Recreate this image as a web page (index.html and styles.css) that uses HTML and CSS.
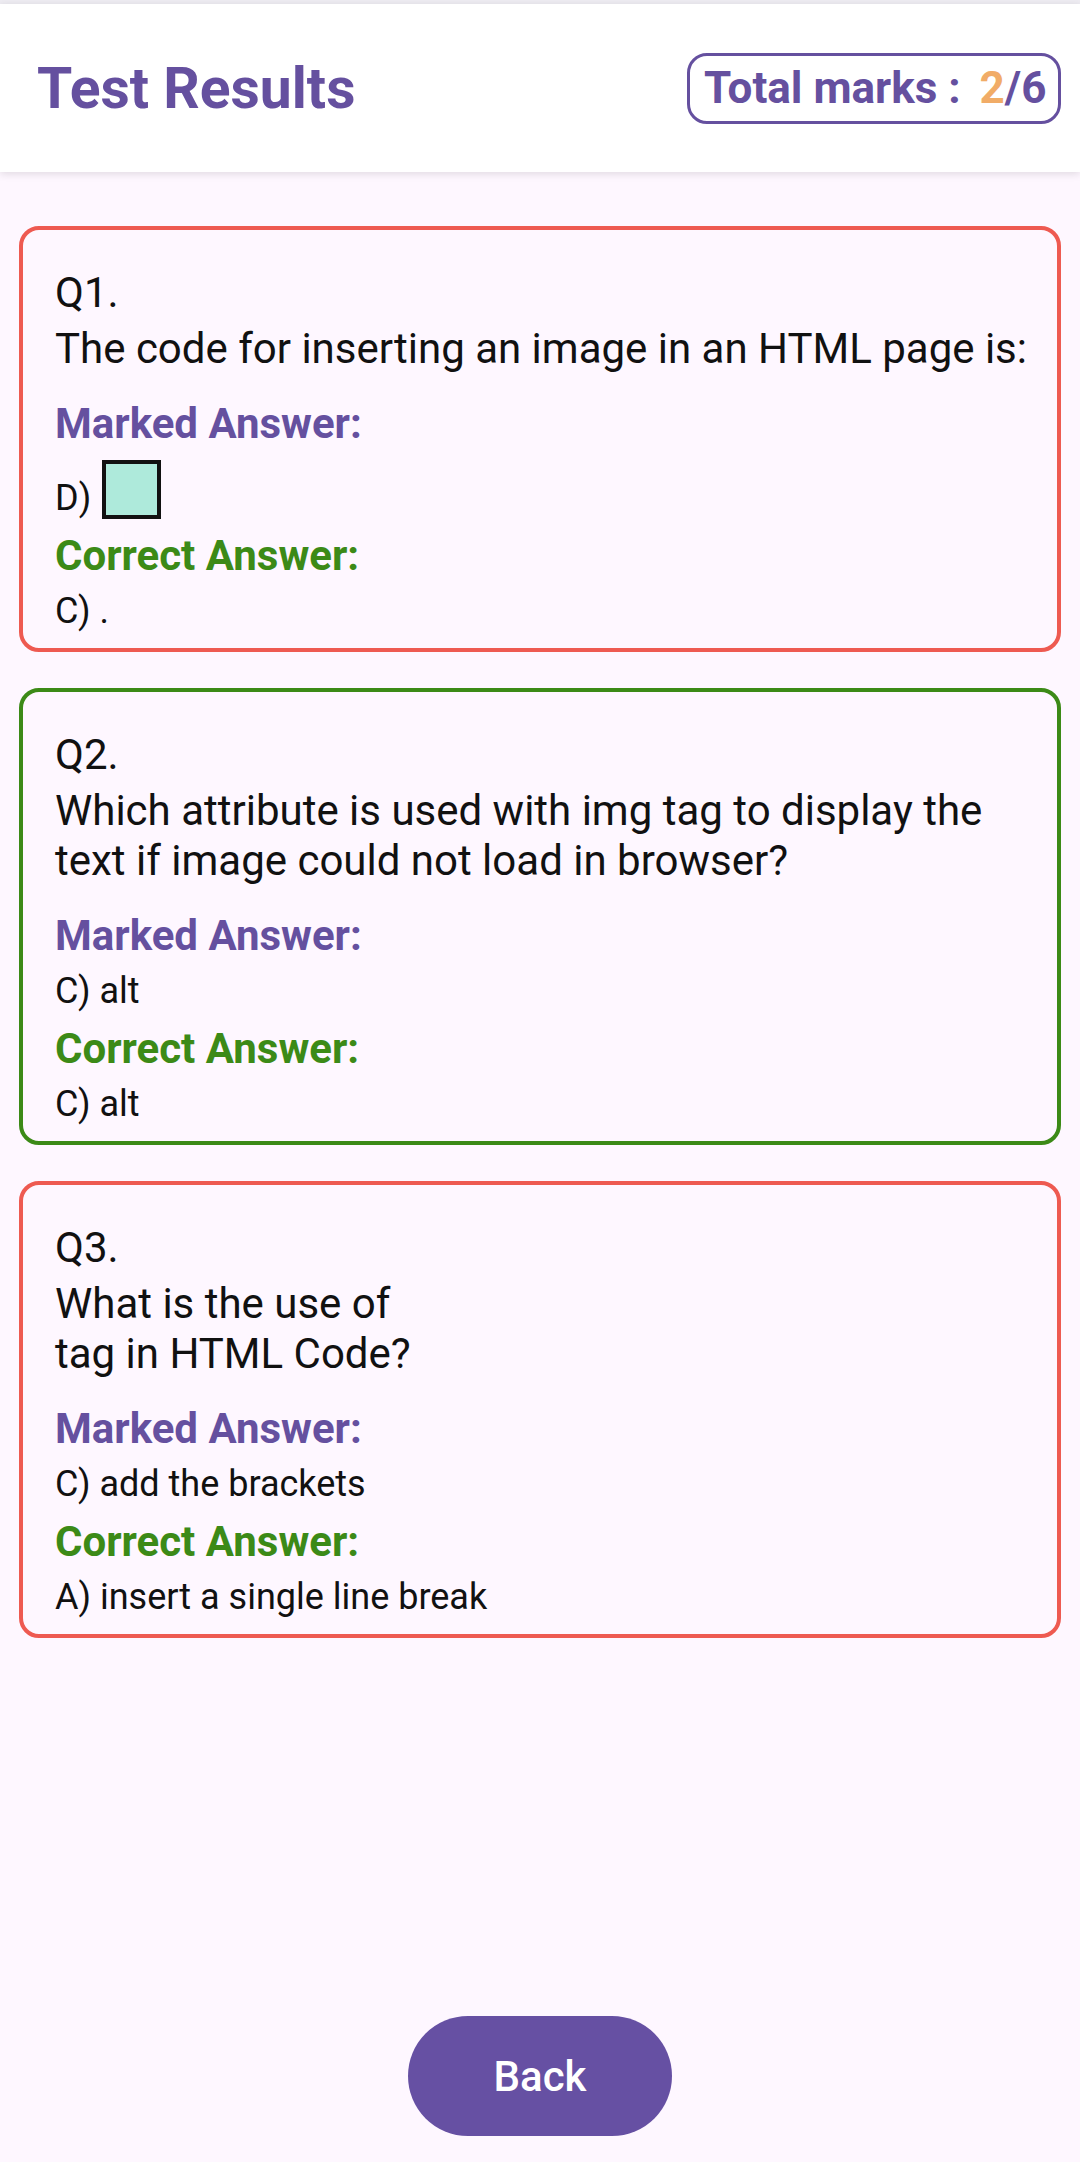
FILE: index.html
```html
<!DOCTYPE html>
<html lang="en">
<head>
    <meta charset="UTF-8">
    <meta name="viewport" content="width=device-width, initial-scale=1.0">
    <title>Test Results</title>
    <link rel="stylesheet" href="styles.css">
</head>
<body>
    <div class="screen">
        <div class="status-bar"></div>

        <header class="top-bar">
            <h1 class="page-title">Test Results</h1>
            <div class="marks-box">Total marks : <span class="marks-got">2</span>/6</div>
        </header>

        <main class="results">
            <div class="card card-wrong">
                <p class="q-number">Q1.</p>
                <p class="q-text">The code for inserting an image in an HTML page is:</p>
                <p class="label label-marked">Marked Answer:</p>
                <p class="answer answer-img">D) <span class="broken-img"></span></p>
                <p class="label label-correct">Correct Answer:</p>
                <p class="answer">C) .</p>
            </div>

            <div class="card card-right">
                <p class="q-number">Q2.</p>
                <p class="q-text">Which attribute is used with img tag to display the text if image could not load in browser?</p>
                <p class="label label-marked">Marked Answer:</p>
                <p class="answer">C) alt</p>
                <p class="label label-correct">Correct Answer:</p>
                <p class="answer">C) alt</p>
            </div>

            <div class="card card-wrong">
                <p class="q-number">Q3.</p>
                <p class="q-text">What is the use of<br>tag in HTML Code?</p>
                <p class="label label-marked">Marked Answer:</p>
                <p class="answer">C) add the brackets</p>
                <p class="label label-correct">Correct Answer:</p>
                <p class="answer">A) insert a single line break</p>
            </div>
        </main>

        <div class="footer">
            <button class="back-btn" type="button">Back</button>
        </div>
    </div>
</body>
</html>
```

FILE: styles.css
```css
:root {
    --background: #fef7ff;
    --primary: #65509f;
    --wrong: #ee5a51;
    --right: #3c8a17;
    --text: #111111;
    --accent: #f1ac67;
}

* {
    box-sizing: border-box;
}

body {
    margin: 0;
    font-family: Roboto, "Noto Sans", sans-serif;
    color: var(--text);
    background-color: var(--background);
}

p {
    margin: 0;
}

.screen {
    min-height: 2162px;
    display: flex;
    flex-direction: column;
}

.status-bar {
    height: 4px;
    background-color: #eeecf2;
}

.top-bar {
    height: 168px;
    display: flex;
    align-items: center;
    justify-content: space-between;
    padding: 0 19px 0 37px;
    background-color: #ffffff;
    box-shadow: 0 2px 8px rgba(0, 0, 0, 0.12);
    position: relative;
}

.page-title {
    margin: 0;
    font-size: 57px;
    font-weight: bold;
    color: var(--primary);
}

.marks-box {
    height: 71px;
    width: 374px;
    display: flex;
    align-items: center;
    padding: 0 0 0 14px;
    border: 3px solid var(--primary);
    border-radius: 20px;
    font-size: 44px;
    font-weight: bold;
    color: var(--primary);
    white-space: pre;
}

.marks-got {
    color: var(--accent);
    margin-left: 8px;
}

.results {
    padding: 54px 19px 0;
    display: flex;
    flex-direction: column;
    gap: 36px;
}

.card {
    border: 4px solid;
    border-radius: 20px;
    padding: 38px 28px 16px 32px;
}

.card-wrong { border-color: var(--wrong); }
.card-right { border-color: var(--right); }

.q-number,
.q-text {
    font-size: 42px;
    line-height: 50px;
}

.q-text {
    margin-top: 6px;
}

.label {
    font-size: 42px;
    line-height: 50px;
    font-weight: bold;
    margin-top: 12px;
}

.label-marked {
    color: var(--primary);
    margin-top: 25px;
}

.label-correct {
    color: var(--right);
}

.answer {
    font-size: 36px;
    line-height: 42px;
    margin-top: 9px;
}

.answer-img {
    margin-top: 11px;
}

.broken-img {
    display: inline-block;
    width: 59px;
    height: 59px;
    vertical-align: -9px;
    margin-left: 2px;
    background-color: #aeeadb;
    border: 4px solid #111111;
}

.footer {
    margin-top: auto;
    display: flex;
    justify-content: center;
    padding-bottom: 26px;
}

.back-btn {
    width: 264px;
    height: 120px;
    border: none;
    border-radius: 60px;
    background-color: #6650a3;
    color: #ffffff;
    font-family: Roboto, sans-serif;
    font-size: 42px;
    font-weight: 500;
}
```
